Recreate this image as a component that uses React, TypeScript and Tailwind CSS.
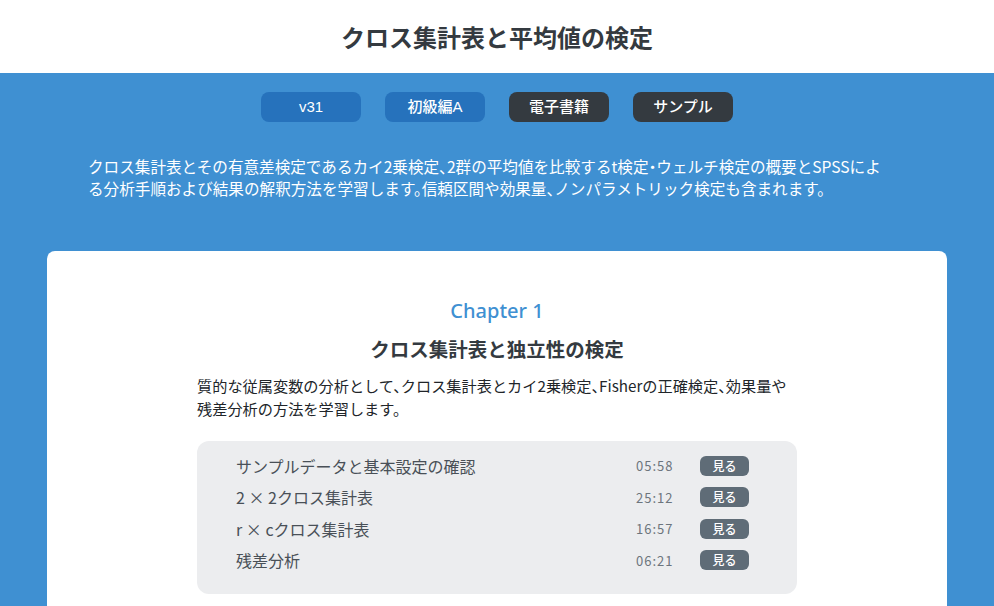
const lessons = [
  { title: 'サンプルデータと基本設定の確認', time: '05:58' },
  { title: '2 × 2クロス集計表', time: '25:12' },
  { title: 'r × cクロス集計表', time: '16:57' },
  { title: '残差分析', time: '06:21' },
];

const tags = [
  { label: 'v31', dark: false },
  { label: '初級編A', dark: false },
  { label: '電子書籍', dark: true },
  { label: 'サンプル', dark: true },
];

const font = { fontFamily: '"Noto Sans CJK JP", "Noto Sans", sans-serif' };

export default function App() {
  return (
    <div className="min-h-screen bg-[#3f90d2]" style={font}>
      {/* Header */}
      <header className="bg-white h-[73px] flex items-center justify-center">
        <h1 className="text-[24px] font-bold text-[#343a40]">クロス集計表と平均値の検定</h1>
      </header>

      {/* Hero */}
      <section className="pt-[19px] pb-[52px]">
        <div className="flex justify-center gap-6 font-['Liberation_Sans','Noto_Sans_CJK_JP',sans-serif]">
          {tags.map(t => (
            <span
              key={t.label}
              className={
                'w-[100px] h-[30px] rounded-lg flex items-center justify-center text-white text-[15px] font-medium ' +
                (t.dark ? 'bg-[#343a40]' : 'bg-[#2672bc]')
              }
            >
              {t.label}
            </span>
          ))}
        </div>
        <div className="mx-auto mt-[33px] max-w-[818px] pr-4">
          <p className="text-white text-[15.6px] leading-[22px] [font-feature-settings:'halt']">
            クロス集計表とその有意差検定であるカイ2乗検定、2群の平均値を比較するt検定・ウェルチ検定の概要とSPSSによる分析手順および結果の解釈方法を学習します。信頼区間や効果量、ノンパラメトリック検定も含まれます。
          </p>
        </div>
      </section>

      {/* Chapter card */}
      <main className="mx-auto max-w-[900px] bg-white rounded-lg pt-[46px] pb-10">
        <div className="mx-auto w-[600px]">
          <p className="text-center text-[20px] font-medium text-[#3f90d2] leading-7 font-['Noto_Sans',sans-serif]">Chapter 1</p>
          <h2 className="mt-[10px] text-center text-[19.5px] font-bold text-[#343a40] leading-7">クロス集計表と独立性の検定</h2>
          <p className="mt-[11px] text-[15.2px] leading-[23px] text-[#212529] [font-feature-settings:'halt']">
            質的な従属変数の分析として、クロス集計表とカイ2乗検定、Fisherの正確検定、効果量や残差分析の方法を学習します。
          </p>
          <ul className="mt-[21px] bg-[#ecedef] rounded-xl pl-[39px] pr-12 pt-[9px] pb-[18px]">
            {lessons.map(l => (
              <li key={l.title} className="flex items-center h-[31.5px]">
                <span className="flex-1 text-[16px] text-[#495057]">{l.title}</span>
                <span className="w-[64px] text-[13px] text-[#6c757d] tracking-[1px]">{l.time}</span>
                <button className="w-[49px] h-[20px] rounded-md bg-[#5f6c77] text-white text-[12px] font-medium flex items-center justify-center">
                  見る
                </button>
              </li>
            ))}
          </ul>
        </div>
      </main>
    </div>
  );
}
